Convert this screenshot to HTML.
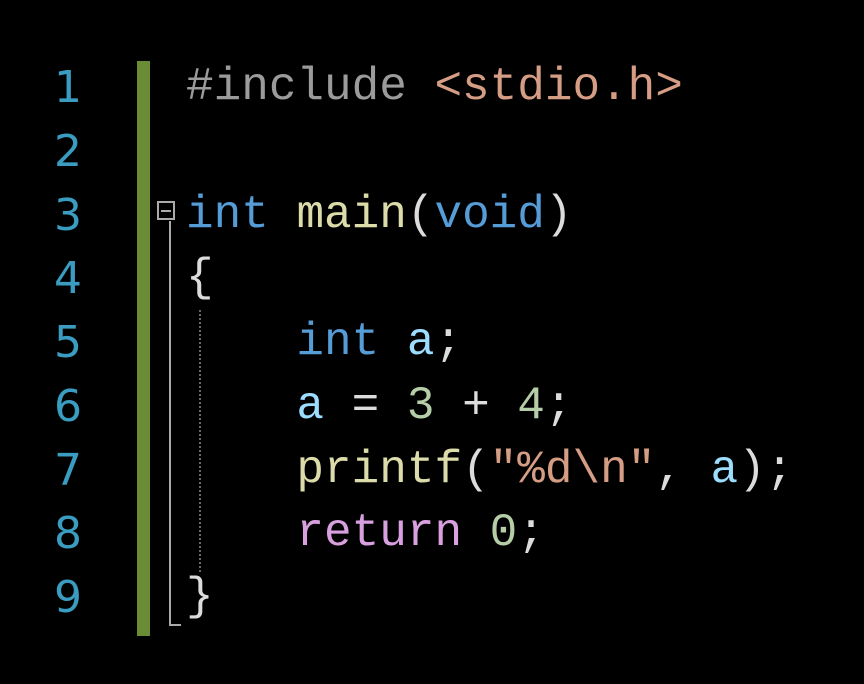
<!DOCTYPE html>
<html><head><style>
body{margin:0;background:#000;width:864px;height:684px;overflow:hidden;position:relative;font-family:"Liberation Mono",monospace;}
.ln{position:absolute;left:20px;width:62px;text-align:right;color:#3a9cc0;font-size:44px;line-height:63.75px;top:56px;font-family:"DejaVu Sans",sans-serif;}
.code{position:absolute;left:186px;top:56px;font-size:46px;line-height:63.75px;color:#dcdcdc;white-space:pre;}
.bar{position:absolute;left:137px;top:61px;width:13px;height:575px;background:#6a8c35;}
.k{color:#569cd6}.f{color:#dcdcaa}.s{color:#d69d85}.p{color:#9b9b9b}.n{color:#b5cea8}.v{color:#9cdcfe}.r{color:#d8a0df}
</style></head><body>
<div class="bar"></div>
<div class="ln">1<br>2<br>3<br>4<br>5<br>6<br>7<br>8<br>9</div>
<div style="position:absolute;left:157px;top:201px;width:18px;height:19px;border:2px solid #aaa;box-sizing:border-box"></div>
<div style="position:absolute;left:161px;top:210px;width:10px;height:2px;background:#aaa"></div>
<div style="position:absolute;left:169px;top:221px;width:2px;height:405px;background:#aaa"></div>
<div style="position:absolute;left:169px;top:624px;width:12px;height:2px;background:#aaa"></div>
<div style="position:absolute;left:199px;top:310px;height:262px;border-left:2px dotted #666"></div>
<div class="code"><span class="p">#include</span> <span class="s">&lt;stdio.h&gt;</span>

<span class="k">int</span> <span class="f">main</span>(<span class="k">void</span>)
{
    <span class="k">int</span> <span class="v">a</span>;
    <span class="v">a</span> = <span class="n">3</span> + <span class="n">4</span>;
    <span class="f">printf</span>(<span class="s">"%d\n"</span>, <span class="v">a</span>);
    <span class="r">return</span> <span class="n">0</span>;
}</div>
</body></html>
